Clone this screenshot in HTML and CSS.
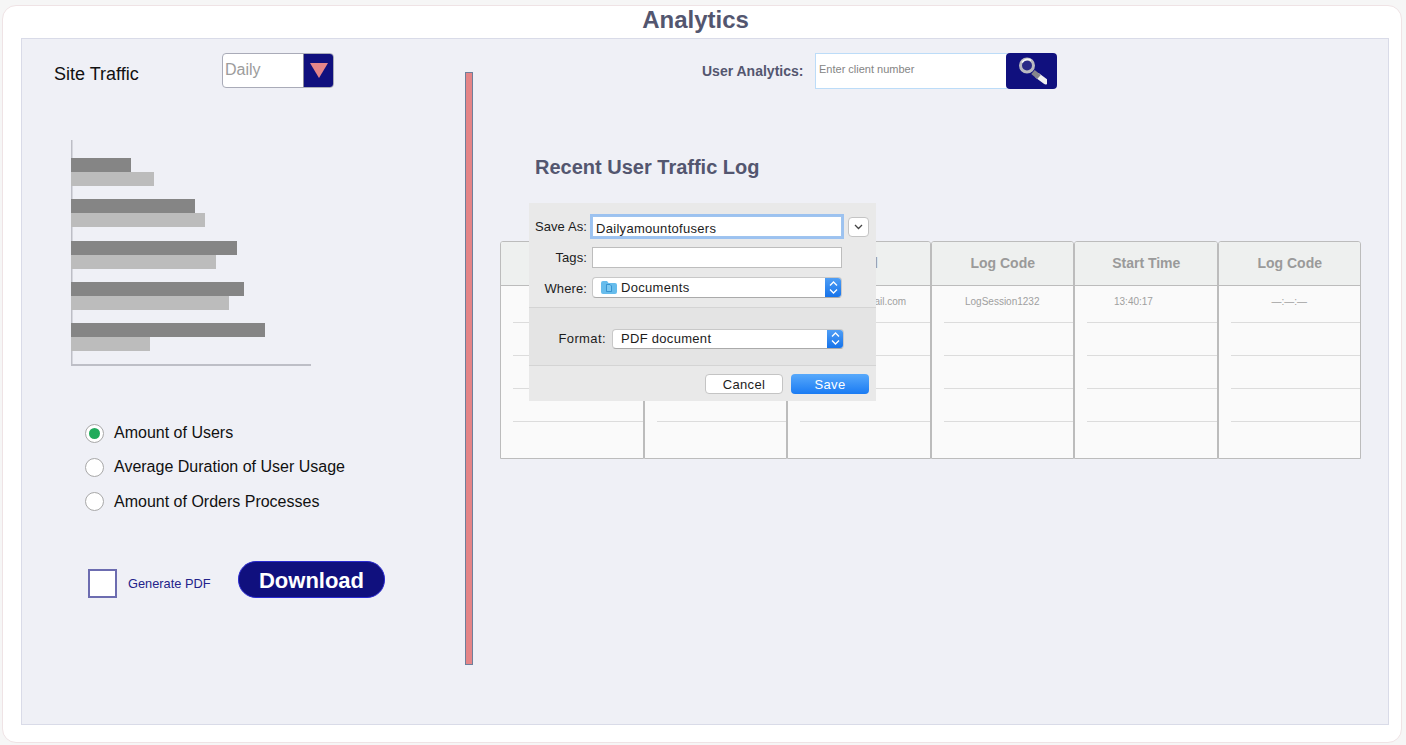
FILE: index.html
```html
<!DOCTYPE html>
<html lang="en">
<head>
<meta charset="utf-8">
<title>Analytics</title>
<link rel="stylesheet" href="styles.css">
</head>
<body>
<main class="card">
  <h1 class="page-title">Analytics</h1>
  <div class="panel">
    <section class="left">
      <div class="traffic-head">
        <h2 class="traffic-title">Site Traffic</h2>
        <div class="range">
          <span class="range-value">Daily</span>
          <span class="range-btn"><svg width="18" height="15" viewBox="0 0 18 15"><path d="M0 0H18L9 15Z" fill="#e58589"/></svg></span>
        </div>
      </div>
      <svg class="chart" width="241" height="227" viewBox="0 0 241 227">
        <g fill="#858585">
          <rect x="0" y="18" width="60" height="14"/>
          <rect x="0" y="59" width="124" height="14"/>
          <rect x="0" y="101" width="166" height="14"/>
          <rect x="0" y="142" width="173" height="14"/>
          <rect x="0" y="183" width="194" height="14"/>
        </g>
        <g fill="#bcbcbc">
          <rect x="0" y="32" width="83" height="14"/>
          <rect x="0" y="73" width="134" height="14"/>
          <rect x="0" y="115" width="145" height="14"/>
          <rect x="0" y="156" width="158" height="14"/>
          <rect x="0" y="197" width="79" height="14"/>
        </g>
        <path d="M0 0H1.500V18H0ZM0 46H1.500V59H0ZM0 87H1.500V101H0ZM0 129H1.500V142H0ZM0 170H1.500V183H0ZM0 211H1.500V224H240V226H0Z" fill="#bdbec6"/>
      </svg>
      <ul class="radios">
        <li class="radio-row"><span class="radio radio-on"></span>Amount of Users</li>
        <li class="radio-row"><span class="radio"></span>Average Duration of User Usage</li>
        <li class="radio-row"><span class="radio"></span>Amount of Orders Processes</li>
      </ul>
      <div class="export">
        <span class="check"></span>
        <span class="check-label">Generate PDF</span>
        <button class="download">Download</button>
      </div>
    </section>
    <div class="divider"></div>
    <section class="right">
      <div class="search">
        <span class="search-label">User Analytics:</span>
        <span class="search-input">Enter client number</span>
        <span class="search-btn">
          <svg width="30" height="28" viewBox="0 0 30 28">
            <path d="M21 19L28.500 24.500" fill="none" stroke="#f0f0f0" stroke-width="5.500" stroke-linecap="round"/>
            <path d="M16 15L22 20" fill="none" stroke="#85858c" stroke-width="5.500"/>
            <circle cx="10" cy="8.500" r="6.500" fill="#2a2a86" stroke="#b9b9c0" stroke-width="3"/>
            <path d="M5 5.500A6.500 6.500 0 0 1 14 3.500" fill="none" stroke="#f6f6f6" stroke-width="1.800"/>
          </svg>
        </span>
      </div>
      <h2 class="log-title">Recent User Traffic Log</h2>
      <div class="log-wrap">
        <div class="log-table">
          <div class="col">
            <div class="col-head"></div>
            <div class="rows"><div class="row"></div><div class="row"></div><div class="row"></div><div class="row"></div><div class="row"></div></div>
          </div>
          <div class="col">
            <div class="col-head"></div>
            <div class="rows"><div class="row"></div><div class="row"></div><div class="row"></div><div class="row"></div><div class="row"></div></div>
          </div>
          <div class="col">
            <div class="col-head">Email</div>
            <div class="rows"><div class="row row-center">usernam@gmail.com</div><div class="row"></div><div class="row"></div><div class="row"></div><div class="row"></div></div>
          </div>
          <div class="col">
            <div class="col-head">Log Code</div>
            <div class="rows"><div class="row row-center">LogSession1232</div><div class="row"></div><div class="row"></div><div class="row"></div><div class="row"></div></div>
          </div>
          <div class="col">
            <div class="col-head">Start Time</div>
            <div class="rows"><div class="row row-time">13:40:17</div><div class="row"></div><div class="row"></div><div class="row"></div><div class="row"></div></div>
          </div>
          <div class="col">
            <div class="col-head">Log Code</div>
            <div class="rows"><div class="row row-center">—:—:—</div><div class="row"></div><div class="row"></div><div class="row"></div><div class="row"></div></div>
          </div>
        </div>
        <div class="dialog">
          <div class="dlg-top">
            <div class="dlg-row dlg-row-save">
              <span class="dlg-label">Save As:</span>
              <span class="dlg-input dlg-focus">Dailyamountofusers</span>
              <span class="dlg-expand"><svg width="9" height="6" viewBox="0 0 9 6"><path d="M1 1L4.500 4.500L8 1" fill="none" stroke="#444" stroke-width="1.300"/></svg></span>
            </div>
            <div class="dlg-row dlg-row-tags">
              <span class="dlg-label">Tags:</span>
              <span class="dlg-input"></span>
            </div>
            <div class="dlg-row">
              <span class="dlg-label dlg-label-where">Where:</span>
              <span class="dlg-select dlg-where">
                <svg class="folder" width="16" height="13" viewBox="0 0 16 13"><path d="M0 2Q0 0 2 0H6L7.500 2H14Q16 2 16 4V11Q16 13 14 13H2Q0 13 0 11Z" fill="#66bcec"/><path d="M5.500 3.500H9L10.500 5V10.500H5.500Z" fill="#7cc8f0" stroke="#2a86c8" stroke-width=".8"/></svg>
                <span class="dlg-select-text">Documents</span>
                <span class="stepper"><svg width="9" height="15" viewBox="0 0 9 15"><path d="M1 5.500L4.500 2L8 5.500M1 9.500L4.500 13L8 9.500" fill="none" stroke="#fff" stroke-width="1.300"/></svg></span>
              </span>
            </div>
          </div>
          <div class="dlg-mid">
            <span class="dlg-label dlg-label-format">Format:</span>
            <span class="dlg-select dlg-format">
              <span class="dlg-select-text">PDF document</span>
              <span class="stepper"><svg width="9" height="15" viewBox="0 0 9 15"><path d="M1 5.500L4.500 2L8 5.500M1 9.500L4.500 13L8 9.500" fill="none" stroke="#fff" stroke-width="1.300"/></svg></span>
            </span>
          </div>
          <div class="dlg-foot">
            <button class="dlg-btn dlg-cancel">Cancel</button>
            <button class="dlg-btn dlg-save">Save</button>
          </div>
        </div>
      </div>
    </section>
  </div>
</main>
</body>
</html>
```
FILE: styles.css
```css
* { box-sizing: border-box; }
html, body { margin: 0; padding: 0; }
body {
  width: 1406px;
  height: 745px;
  overflow: hidden;
  background: #f6f6f6;
  font-family: "Liberation Sans", Arial, sans-serif;
  padding: 5px 4px 2px 2px;
}
.card {
  width: 1400px;
  height: 738px;
  background: #fff;
  border: 1px solid #efe3e5;
  border-radius: 14px;
  padding: 0 12px 0 18px;
}
.page-title {
  margin: 0;
  height: 32px;
  line-height: 28px;
  font-size: 24px;
  font-weight: 700;
  color: #53566f;
  text-align: center;
  padding-right: 19px;
}
.panel {
  display: flex;
  height: 687px;
  background: #eff0f6;
  border: 1px solid #d9dbe8;
}
.left { width: 443px; flex: none; }
.traffic-head { display: flex; padding: 14px 0 0 32px; }
.traffic-title {
  margin: 0;
  width: 168px;
  font-size: 18px;
  font-weight: 400;
  color: #111;
  line-height: 43px;
}
.range {
  display: flex;
  width: 112px;
  height: 35px;
  background: #fff;
  border: 1px solid #a9abb8;
  border-radius: 4px;
  overflow: hidden;
}
.range-value { flex: 1; font-size: 16px; line-height: 32px; color: #9c9c9c; padding-left: 2px; }
.range-btn {
  width: 30px;
  display: flex;
  align-items: center;
  justify-content: center;
  background: #10107e;
  border-left: 1px solid #8a8a9c;
}
.chart { display: block; margin: 44px 0 0 49px; }
.radios { list-style: none; margin: 56px 0 0; padding: 0 0 0 63px; }
.radio-row {
  display: flex;
  align-items: center;
  gap: 10px;
  height: 20px;
  margin-bottom: 14.400px;
  font-size: 16px;
  color: #111;
}
.radio {
  width: 19px;
  height: 19px;
  border-radius: 50%;
  background: #fff;
  border: 1px solid #a8a8a8;
  display: flex;
  align-items: center;
  justify-content: center;
}
.radio-on::after {
  content: "";
  width: 11px;
  height: 11px;
  border-radius: 50%;
  background: #21ab5c;
}
.export { display: flex; align-items: center; margin-top: 49px; padding-left: 66px; height: 37px; }
.check {
  width: 29px;
  height: 29px;
  margin-top: 8px;
  background: #fff;
  border: 2px solid #6c6cb0;
}
.check-label { margin: 9px 0 0 11px; width: 110px; font-size: 12.800px; color: #23238a; }
.download {
  width: 147px;
  height: 37px;
  padding: 3px 0 0;
  background: #10107e;
  border: 1px solid #2a2ad0;
  border-radius: 18px;
  color: #fff;
  font-family: inherit;
  font-size: 22px;
  font-weight: 700;
}
.divider {
  flex: none;
  width: 8px;
  height: 593px;
  margin-top: 33px;
  background: #e58587;
  border: 1px solid #6f7f9a;
}
.right { flex: 1; min-width: 0; }
.search { display: flex; align-items: center; padding: 14px 0 0 229px; }
.search-label { width: 113px; font-size: 14px; font-weight: 700; color: #53566f; }
.search-input {
  width: 192px;
  height: 36px;
  background: #fff;
  border: 1px solid #bcdcf8;
  border-right: 0;
  font-size: 11px;
  line-height: 30px;
  padding-left: 3px;
  color: #858585;
}
.search-btn {
  width: 51px;
  height: 36px;
  margin-left: -1px;
  background: #10107e;
  border-radius: 4px;
  display: flex;
  align-items: center;
  justify-content: center;
}
.log-title {
  margin: 67px 0 0 62px;
  font-size: 20px;
  line-height: 23px;
  font-weight: 700;
  color: #53566f;
}
.log-wrap { position: relative; margin: 62px 0 0 27px; width: 861px; }
.log-table { display: grid; grid-template-columns: repeat(6, 1fr); height: 218px; }
.col {
  display: flex;
  flex-direction: column;
  border: 1px solid #bcbcbc;
  border-radius: 3px 3px 0 0;
  background: #fafafa;
  overflow: hidden;
}
.col-head {
  height: 44px;
  flex: none;
  background: #eef0ef;
  border-bottom: 1px solid #bcbcbc;
  font-size: 14px;
  font-weight: 700;
  line-height: 43px;
  text-align: center;
  color: #9a9a9a;
  padding-left: 1px;
}
.rows { flex: 1; }
.row {
  height: 33px;
  margin-left: 12px;
  border-bottom: 1px solid #dcdcdc;
  font-size: 10px;
  line-height: 32px;
  color: #a0a0a0;
}
.row:first-child { height: 37px; }
.row:last-child { border-bottom: 0; }
.row-center { margin-left: 0; border-bottom: 0; height: 37px; position: relative; text-align: center; }
.row-center::after {
  content: "";
  position: absolute;
  left: 12px;
  right: 0;
  bottom: 0;
  border-bottom: 1px solid #dcdcdc;
}
.row-time { padding-left: 27px; }
.dialog {
  position: absolute;
  left: 29px;
  top: -38px;
  width: 347px;
  height: 198px;
  background: #e9e9e9;
  font-size: 13px;
  letter-spacing: .3px;
  color: #1c1c1c;
  display: flex;
  flex-direction: column;
}
.dlg-top { height: 105px; padding-top: 13px; border-bottom: 1px solid #d4d4d4; flex: none; }
.dlg-row { display: flex; align-items: center; height: 21px; }
.dlg-row-save { margin-bottom: 10px; }
.dlg-row-tags { margin-bottom: 9px; }
.dlg-label { width: 58px; margin-right: 5px; text-align: right; letter-spacing: .1px; }
.dlg-label-where { padding-top: 2px; }
.dlg-input {
  width: 250px;
  height: 21px;
  background: #fff;
  border: 1px solid #bdbdbd;
  line-height: 23px;
  padding-left: 3px;
}
.dlg-focus { border: 1px solid #9fc4ef; box-shadow: 0 0 0 2px #9cc2f0; }
.dlg-expand {
  width: 21px;
  height: 20px;
  margin-left: 6px;
  background: #fff;
  border: 1px solid #c4c4c4;
  border-radius: 4px;
  display: flex;
  align-items: center;
  justify-content: center;
}
.dlg-select {
  display: flex;
  align-items: center;
  background: #fff;
  border: 1px solid #c8c8c8;
  border-bottom-color: #aaa;
  border-radius: 4px;
  overflow: hidden;
}
.dlg-where { width: 250px; height: 21px; padding-left: 8px; }
.folder { margin-right: 4px; }
.dlg-select-text { flex: 1; }
.stepper {
  width: 16px;
  align-self: stretch;
  background: linear-gradient(#4f9ef5, #1673ea);
  display: flex;
  align-items: center;
  justify-content: center;
}
.dlg-mid {
  height: 58px;
  flex: none;
  display: flex;
  align-items: center;
  background: #e4e4e4;
  border-bottom: 1px solid #d4d4d4;
  padding-top: 4px;
}
.dlg-label-format { width: 77px; margin-right: 6px; letter-spacing: .4px; }
.dlg-format { width: 232px; height: 20px; padding-left: 8px; }
.dlg-foot { flex: 1; display: flex; justify-content: flex-end; gap: 8px; padding: 8px 7px 0 0; }
.dlg-btn {
  width: 78px;
  height: 20px;
  padding: 0;
  border-radius: 4px;
  font-family: inherit;
  font-size: 13px;
  letter-spacing: .3px;
}
.dlg-cancel { background: #fff; border: 1px solid #c4c4c4; color: #1c1c1c; }
.dlg-save { background: linear-gradient(#58a9fb, #1a7bf3); border: 0; color: #fff; }
```
